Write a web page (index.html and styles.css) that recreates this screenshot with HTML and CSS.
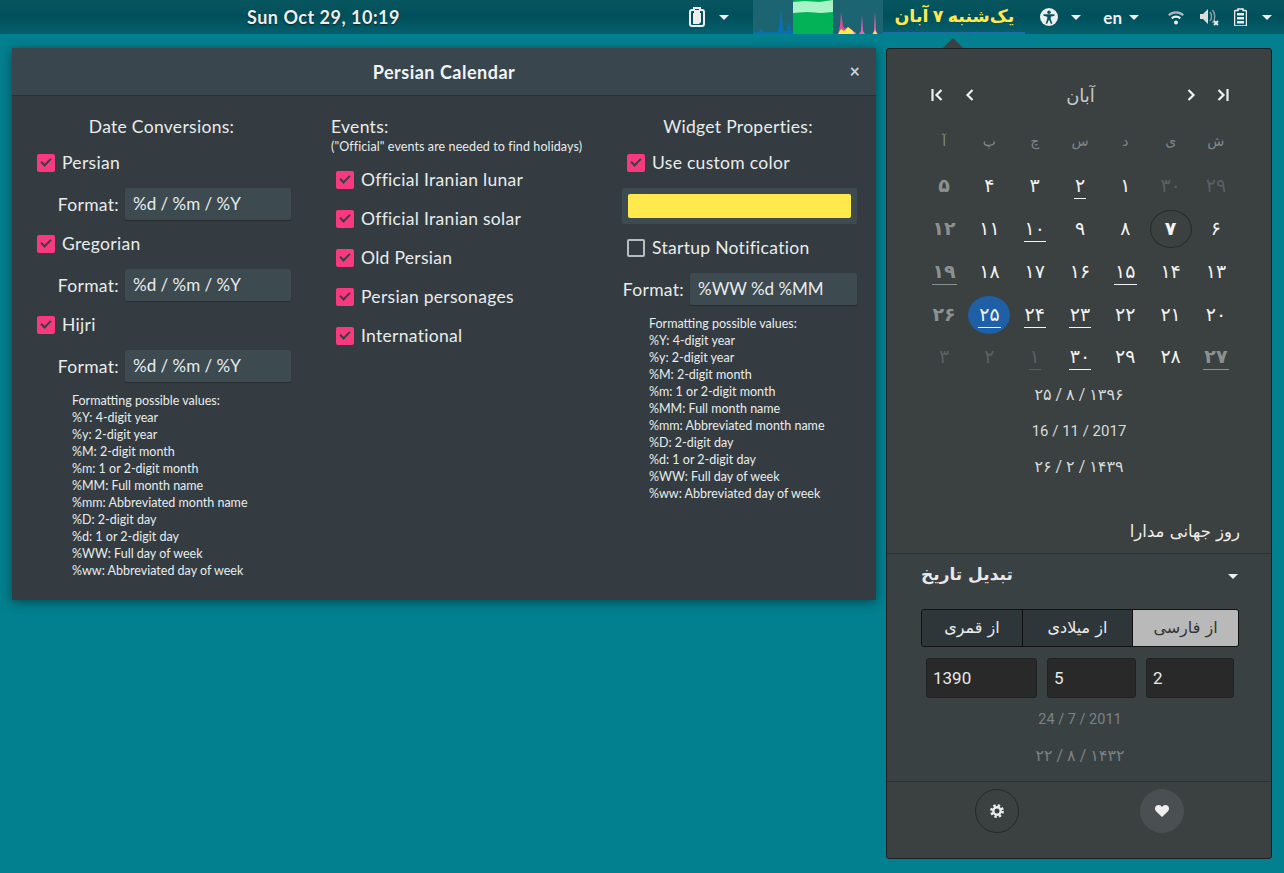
FILE: index.html
```html
<!DOCTYPE html>
<html lang="en" dir="ltr">
<head>
    <meta charset="utf-8">
    <title>Persian Calendar</title>
    <meta name="viewport" content="width=device-width, initial-scale=1.0">
    <link rel="stylesheet" href="styles.css">
</head>
<body>
    <div class="topbar">
        <div class="clock">Sun Oct 29, 10:19</div>
        <div class="tray">
            <svg class="ic clip" viewBox="0 0 16 20"><path d="M3 3h2V1h6v2h2a2 2 0 0 1 2 2v12a2 2 0 0 1-2 2H3a2 2 0 0 1-2-2V5a2 2 0 0 1 2-2z" fill="none" stroke="#eee" stroke-width="2"/><path d="M5 3h6v3H5zM4 6h8v9l-2 2H4z" fill="#eee"/></svg>
            <span class="caret c1"></span>
            <svg class="graph" width="130" height="34" viewBox="0 0 130 34">
                <rect width="130" height="34" fill="#1c6472"/>
                <path d="M0 34v-2h6l2-3 2 3h14l2-5 2-18 2 18 1 4h3l2-10 2 10h6l2-2h8v5z" fill="#0a6fb0"/>
                <rect x="40" width="40" height="34" fill="#02b257"/>
                <path d="M40 13V2l12-1 14 1 14-2v12l-12 1-14-1z" fill="#a9f3c8"/>
                <path d="M85 34l2-8 1-14 2 14 2 3 3-2 3 2 3 3h2v2z" fill="#d9508f"/>
                <path d="M92 34l3-3 3 3zM106 34l2-3 1-16 1 16 2 3zM119 34l2-3 1-20 1 20 2 3z" fill="#ed5fb0"/>
                <path d="M85 34l3-5 3 2 4-4 5 4 2 3zM120 34l2-4 2 4z" fill="#ffe94d"/>
            </svg>
            <div class="today" dir="rtl">یک‌شنبه ۷ آبان</div>
            <svg class="ic a11y" viewBox="0 0 18 18"><circle cx="9" cy="9" r="9" fill="#eee"/><circle cx="9" cy="4.2" r="1.7" fill="#03535f"/><path d="M3.5 6.3h11v1.4l-3.8 1v2l1.6 4.8-1.3.4L9 11.4l-2 4.5-1.300-.4 1.600-4.800v-2l-3.800-1z" fill="#03535f"/></svg>
            <span class="caret c2"></span>
            <span class="lang">en</span>
            <span class="caret c3"></span>
            <svg class="ic wifi" viewBox="0 0 18 16"><path d="M1 5.500a11.500 11.500 0 0 1 16 0l-1.500 1.600a9.300 9.300 0 0 0-13 0z" fill="#aab8bb"/><path d="M4 8.600a7.200 7.200 0 0 1 10 0l-1.500 1.600a5 5 0 0 0-7 0z" fill="#eee"/><circle cx="9" cy="13.500" r="2" fill="#eee"/></svg>
            <svg class="ic vol" viewBox="0 0 21 20"><path d="M1 7h3l5-5v15l-5-5H1z" fill="#ddd"/><path d="M11 5c2 2.500 2 6.500 0 9M13.500 3c3 3.500 3 9.500 0 13" fill="none" stroke="#8fa3a7" stroke-width="1.400"/><path d="M15 14l4 4m0-4l-4 4" stroke="#eee" stroke-width="1.800"/></svg>
            <svg class="ic batt" viewBox="0 0 13 18"><path d="M4 1h5v1.500h2.500a1 1 0 0 1 1 1V17a1 1 0 0 1-1 1h-10a1 1 0 0 1-1-1V3.500a1 1 0 0 1 1-1H4z" fill="none" stroke="#eee" stroke-width="1.500"/><path d="M3 5h7v2.500H3zM3 9h7v2.500H3zM3 13h7v2.500H3z" fill="#eee"/></svg>
            <span class="caret c4"></span>
        </div>
    </div>

    <!-- settings window -->
    <div class="dialog">
        <div class="dialog-head">
            <span class="dialog-title">Persian Calendar</span>
            <span class="close">×</span>
        </div>
        <div class="dialog-body">
            <div class="col col-a">
                <div class="col-title">Date Conversions:</div>
                <label class="check first"><span class="box on"></span>Persian</label>
                <div class="format"><span>Format:</span><span class="field">%d / %m / %Y</span></div>
                <label class="check"><span class="box on"></span>Gregorian</label>
                <div class="format"><span>Format:</span><span class="field">%d / %m / %Y</span></div>
                <label class="check"><span class="box on"></span>Hijri</label>
                <div class="format"><span>Format:</span><span class="field">%d / %m / %Y</span></div>
                <div class="hint hint-a">Formatting possible values:<br>%Y: 4-digit year<br>%y: 2-digit year<br>%M: 2-digit month<br>%m: 1 or 2-digit month<br>%MM: Full month name<br>%mm: Abbreviated month name<br>%D: 2-digit day<br>%d: 1 or 2-digit day<br>%WW: Full day of week<br>%ww: Abbreviated day of week</div>
            </div>
            <div class="col col-b">
                <div class="col-title left">Events:</div>
                <div class="sub">("Official" events are needed to find holidays)</div>
                <label class="check event"><span class="box on"></span>Official Iranian lunar</label>
                <label class="check event"><span class="box on"></span>Official Iranian solar</label>
                <label class="check event"><span class="box on"></span>Old Persian</label>
                <label class="check event"><span class="box on"></span>Persian personages</label>
                <label class="check event"><span class="box on"></span>International</label>
            </div>
            <div class="col col-c">
                <div class="col-title">Widget Properties:</div>
                <label class="check first"><span class="box on"></span>Use custom color</label>
                <div class="color-btn"><div class="swatch"></div></div>
                <label class="check startup"><span class="box"></span>Startup Notification</label>
                <div class="format wide"><span>Format:</span><span class="field">%WW %d %MM</span></div>
                <div class="hint hint-c">Formatting possible values:<br>%Y: 4-digit year<br>%y: 2-digit year<br>%M: 2-digit month<br>%m: 1 or 2-digit month<br>%MM: Full month name<br>%mm: Abbreviated month name<br>%D: 2-digit day<br>%d: 1 or 2-digit day<br>%WW: Full day of week<br>%ww: Abbreviated day of week</div>
            </div>
        </div>
    </div>

    <!-- applet popup -->
    <div class="arrow"></div>
    <div class="popup">
        <div class="nav">
            <svg class="nav-ic first-ic" viewBox="0 0 12 12"><path d="M1.500 0v12M10.500 1l-5 5 5 5" fill="none" stroke="#eee" stroke-width="2.200"/></svg>
            <svg class="nav-ic prev-ic" viewBox="0 0 12 12"><path d="M8.500 1l-5 5 5 5" fill="none" stroke="#eee" stroke-width="2.200"/></svg>
            <span class="month" dir="rtl">آبان</span>
            <svg class="nav-ic next-ic" viewBox="0 0 12 12"><path d="M3.500 1l5 5-5 5" fill="none" stroke="#eee" stroke-width="2.200"/></svg>
            <svg class="nav-ic last-ic" viewBox="0 0 12 12"><path d="M10.500 0v12M1.500 1l5 5-5 5" fill="none" stroke="#eee" stroke-width="2.200"/></svg>
        </div>
        <div class="cal" dir="rtl">
            <span class="wd">ش</span><span class="wd">ی</span><span class="wd">د</span><span class="wd">س</span><span class="wd">چ</span><span class="wd">پ</span><span class="wd">آ</span>

            <span class="d out">۲۹</span><span class="d out">۳۰</span><span class="d">۱</span><span class="d"><u>۲</u></span><span class="d">۳</span><span class="d">۴</span><span class="d fri">۵</span>

            <span class="d">۶</span><span class="d now">۷</span><span class="d">۸</span><span class="d">۹</span><span class="d"><u>۱۰</u></span><span class="d">۱۱</span><span class="d fri">۱۲</span>

            <span class="d">۱۳</span><span class="d">۱۴</span><span class="d"><u>۱۵</u></span><span class="d">۱۶</span><span class="d">۱۷</span><span class="d">۱۸</span><span class="d fri"><u>۱۹</u></span>

            <span class="d">۲۰</span><span class="d">۲۱</span><span class="d">۲۲</span><span class="d"><u>۲۳</u></span><span class="d"><u>۲۴</u></span><span class="d sel"><u>۲۵</u></span><span class="d fri">۲۶</span>

            <span class="d fri"><u>۲۷</u></span><span class="d">۲۸</span><span class="d">۲۹</span><span class="d"><u>۳۰</u></span><span class="d out"><u>۱</u></span><span class="d out">۲</span><span class="d out">۳</span>
        </div>
        <div class="conv-line fa">۲۵ / ۸ / ۱۳۹۶</div>
        <div class="conv-line">16 / 11 / 2017</div>
        <div class="conv-line fa">۲۶ / ۲ / ۱۴۳۹</div>
        <div class="event-name" dir="rtl">روز جهانی مدارا</div>
        <div class="section">
            <div class="section-head">
                <span class="section-title" dir="rtl">تبدیل تاریخ</span>
                <span class="caret small"></span>
            </div>
            <div class="seg">
                <span class="seg-a">از قمری</span>
                <span class="seg-b">از میلادی</span>
                <span class="seg-c">از فارسی</span>
            </div>
            <div class="inputs">
                <span class="num n1">1390</span>
                <span class="num n2">5</span>
                <span class="num n3">2</span>
            </div>
            <div class="result first-res">24 / 7 / 2011</div>
            <div class="result fa">۲۲ / ۸ / ۱۴۳۲</div>
        </div>
        <div class="foot">
            <span class="round">
                <svg width="16" height="16" viewBox="0 0 16 16"><circle cx="8" cy="8" r="3.700" fill="none" stroke="#eee" stroke-width="2.400"/><circle cx="8" cy="8" r="5.700" fill="none" stroke="#eee" stroke-width="2.400" stroke-dasharray="2.400 2.080"/></svg>
            </span>
            <span class="round filled">
                <svg width="14" height="12" viewBox="0 0 14 12"><path d="M7 12L1 6.200C-1.500 3 1 0 3.600 0 5 0 6.300.7 7 2c.7-1.300 2-2 3.400-2C13 0 15.500 3 13 6.200z" fill="#eee"/></svg>
            </span>
        </div>
    </div>
</body>
</html>
```

FILE: styles.css
```css
body {
    margin: 0;
    width: 1284px;
    height: 873px;
    overflow: hidden;
    position: relative;
    background-color: #02808f;
    font-family: 'Lato', 'DejaVu Sans', sans-serif;
    color: #e8ecec;
}

/* top bar */
.topbar {
    height: 34px;
    display: flex;
    align-items: center;
    background: linear-gradient(#07565f, #00505c 50%, #04606c);
    color: #eee;
    font-size: 17px;
}
.clock {
    margin-left: 247px;
    font-weight: 700;
    font-size: 18px;
    letter-spacing: 0.5px;
    text-shadow: 0 1px 2px rgba(0,0,0,0.6);
}
.tray {
    margin-left: auto;
    height: 34px;
    display: flex;
    align-items: center;
}
.ic {
    display: block;
}
.caret {
    width: 0;
    height: 0;
    border-left: 5px solid transparent;
    border-right: 5px solid transparent;
    border-top: 5px solid #eee;
}
.clip { width: 16px; height: 20px; }
.c1 { margin-left: 14px; }
.graph { margin-left: 24px; display: block; }
.today {
    width: 142px;
    height: 32px;
    line-height: 31px;
    text-align: center;
    border-bottom: 2px solid #1d6ea8;
    color: #ffe94d;
    font-weight: 700;
    font-size: 17.5px;
}
.a11y { width: 18px; height: 18px; margin-left: 15px; }
.c2 { margin-left: 13px; }
.lang { margin-left: 22px; font-weight: 700; font-size: 17px; }
.c3 { margin-left: 7px; }
.wifi { width: 18px; height: 16px; margin-left: 28px; }
.vol { width: 21px; height: 20px; margin-left: 14px; }
.batt { width: 13px; height: 18px; margin-left: 14px; }
.c4 { margin-left: 15px; margin-right: 12px; }

/* settings window */
.dialog {
    position: absolute;
    left: 12px;
    top: 48px;
    width: 864px;
    height: 552px;
    background: #343c41;
    border-radius: 3px 3px 0 0;
    box-shadow: 0 2px 12px rgba(0,0,0,0.45);
}
.dialog-head {
    height: 47px;
    position: relative;
    display: flex;
    align-items: center;
    justify-content: center;
    background: #39464e;
    border-bottom: 1px solid #283035;
}
.dialog-title {
    font-weight: 700;
    font-size: 18px;
    letter-spacing: 0.5px;
    color: #f2f4f4;
}
.close {
    position: absolute;
    right: 16px;
    top: 12px;
    font-size: 18px;
    font-weight: 700;
    color: #c9cfd1;
}
.dialog-body {
    display: flex;
    padding: 20px 0 0 24px;
    font-size: 17.5px;
    letter-spacing: 0.3px;
}
.col-title {
    height: 22px;
    line-height: 22px;
    text-align: center;
}
.col-title.left {
    text-align: left;
}
.col-a { width: 255px; }
.col-a .col-title { padding-right: 4px; }
.col-b { width: 250px; margin-left: 40px; }
.col-c { width: 235px; margin-left: 41px; }
.col-c .col-title { padding-right: 3px; }
.check {
    display: flex;
    align-items: flex-start;
    height: 22px;
    line-height: 21px;
    gap: 7px;
}
.check.first { margin-top: 14px; }
.col-a .check { margin-top: 13px; margin-left: 1px; }
.col-a .check.first { margin-top: 14px; }
.col-c .check { margin-left: 5px; }
.box {
    width: 14px;
    height: 14px;
    flex: none;
    margin-top: 2px;
    position: relative;
    border: 2px solid #b8bec0;
    border-radius: 2px;
}
.box.on {
    background: #f9397e;
    border-color: #f9397e;
}
.box.on::after {
    content: "";
    position: absolute;
    left: 2px;
    top: 2px;
    width: 8px;
    height: 4px;
    border-left: 2px solid #3a3f44;
    border-bottom: 2px solid #3a3f44;
    transform: rotate(-45deg);
}
.format {
    display: flex;
    align-items: center;
    justify-content: flex-end;
    gap: 6px;
    margin-top: 14px;
}
.field {
    display: block;
    box-sizing: border-box;
    width: 166px;
    height: 32px;
    line-height: 32px;
    padding-left: 8px;
    font-size: 17px;
    letter-spacing: 0;
    background: #3d4a50;
    border-radius: 2px;
    box-shadow: 0 1px 1px rgba(0,0,0,0.25);
}
.format.wide { margin-top: 14px; }
.format.wide .field { width: 167px; }
.hint {
    font-size: 12.5px;
    line-height: 17px;
    letter-spacing: 0;
}
.hint-a { margin: 10px 0 0 36px; }
.hint-c { margin: 10px 0 0 27px; }
.sub {
    font-size: 12.5px;
    line-height: 17px;
    letter-spacing: 0.1px;
    white-space: nowrap;
}
.event {
    margin: 0 0 17px 5px;
}
.sub + .event { margin-top: 14px; }
.color-btn {
    margin-top: 14px;
    height: 36px;
    box-sizing: border-box;
    padding: 6px;
    background: #3d4a50;
    border-radius: 2px;
}
.swatch {
    height: 24px;
    background: #ffe94d;
    border-radius: 2px;
}
.startup { margin-top: 13px; }

/* popup */
.arrow {
    position: absolute;
    left: 943px;
    top: 38px;
    width: 0;
    height: 0;
    border-left: 10px solid transparent;
    border-right: 10px solid transparent;
    border-bottom: 10px solid #3b4041;
}
.popup {
    position: absolute;
    left: 886px;
    top: 48px;
    width: 384px;
    height: 809px;
    background: #3b4041;
    border: 1px solid #1c2022;
    border-radius: 3px;
    font-family: 'DejaVu Sans', sans-serif;
}
.nav {
    height: 24px;
    margin-top: 34px;
    display: flex;
    align-items: center;
    padding: 0 42px 0 44px;
}
.nav-ic { width: 12px; height: 12px; display: block; }
.prev-ic { margin-left: 21px; }
.next-ic { margin-right: 20px; }
.month {
    flex: 1;
    text-align: center;
    color: #c6caca;
    font-size: 18px;
    padding-right: 0;
}
.cal {
    margin: 15px 32px 0 34px;
    display: grid;
    grid-template-columns: repeat(7, 45.3px);
    grid-auto-rows: 42.8px;
    justify-content: center;
    align-items: center;
    justify-items: center;
    font-size: 19px;
}
.wd {
    color: #80868a;
    font-size: 14px;
    margin-bottom: 4px;
}
.d {
    color: #f2f2f2;
    width: 42px;
    height: 38px;
    line-height: 36px;
    text-align: center;
    border-radius: 50%;
}
.d u {
    text-decoration: none;
    display: inline-block;
    line-height: 26px;
    padding: 0 1px;
    border-bottom: 1px solid currentColor;
}
.out { color: #5a6062; }
.fri { color: #8b9091; font-weight: 700; }
.now {
    font-weight: 700;
    box-shadow: inset 0 0 0 1px #25292a;
}
.sel { background: #1f5fa6; }
.conv-line {
    text-align: center;
    height: 36px;
    line-height: 36px;
    font-family: 'Roboto', 'DejaVu Sans', sans-serif;
    font-size: 15px;
    color: #d8dbdb;
}
.conv-line.fa { font-size: 16px; }
.cal + .conv-line { margin-top: -2px; }
.event-name {
    margin: 32px 31px 0 0;
    height: 30px;
    line-height: 30px;
    font-size: 16.5px;
    color: #eee;
}
.section {
    margin-top: 6px;
    border-top: 1px solid #2b3032;
    padding: 0 32px 0 34px;
    height: 228px;
    box-sizing: border-box;
    background: #3a4143;
}
.section-head {
    height: 40px;
    display: flex;
    align-items: center;
    justify-content: space-between;
}
.section-title {
    font-weight: 700;
    font-size: 17px;
    color: #e8e8e8;
}
.caret.small { margin-right: 1px; margin-top: 6px; }
.seg {
    margin-top: 15px;
    height: 38px;
    box-sizing: border-box;
    display: flex;
    border: 1px solid #111;
    border-radius: 3px;
    font-size: 16px;
    line-height: 35px;
    text-align: center;
    overflow: hidden;
}
.seg span { display: block; }
.seg-a { width: 100px; background: #2f3639; }
.seg-b { width: 109px; border-left: 1px solid #111; border-right: 1px solid #111; background: #2f3639; }
.seg-c { flex: 1; background: #b9b9b9; color: #333; }
.inputs {
    display: flex;
    gap: 10px;
    margin: 11px 5px 0;
}
.num {
    display: block;
    box-sizing: border-box;
    height: 40px;
    line-height: 38px;
    padding-left: 6px;
    background: #292929;
    border: 1px solid #1f2223;
    border-radius: 3px;
    font-family: 'Roboto', sans-serif;
    font-size: 17px;
    color: #e8e8e8;
}
.n1 { width: 111px; }
.n2 { width: 89px; }
.n3 { width: 88px; }
.result {
    text-align: center;
    height: 36px;
    line-height: 36px;
    font-size: 14.5px;
    font-family: 'Roboto', 'DejaVu Sans', sans-serif;
    color: #7c8183;
}
.result.fa { font-size: 16px; }
.first-res { margin-top: 4px; }
.foot {
    border-top: 1px solid #2b3032;
    height: 76px;
    box-sizing: border-box;
    display: flex;
    padding: 7px 0 0 88px;
    gap: 121px;
}
.round {
    width: 44px;
    height: 44px;
    box-sizing: border-box;
    display: flex;
    align-items: center;
    justify-content: center;
    border: 1px solid #25292a;
    border-radius: 50%;
}
.round.filled {
    border-color: #4a5051;
    background: #4a5051;
}
```
